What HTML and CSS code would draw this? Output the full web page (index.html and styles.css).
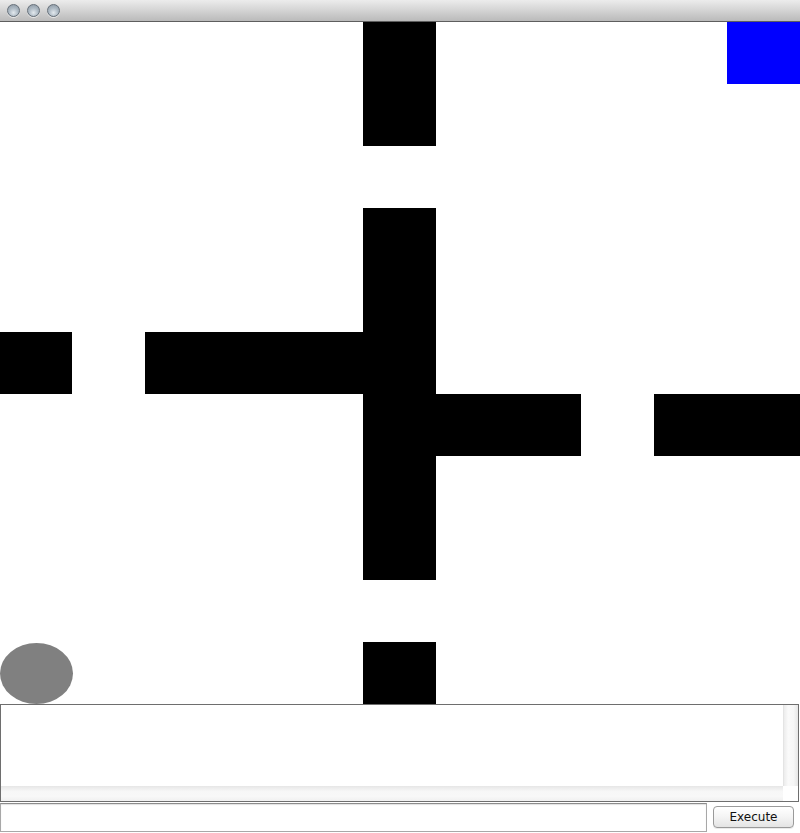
FILE: index.html
```html
<!DOCTYPE html>
<html>
<head>
<meta charset="utf-8">
<link rel="stylesheet" href="styles.css">
</head>
<body>
<div class="window">
  <div class="titlebar">
    <span class="light"></span>
    <span class="light"></span>
    <span class="light"></span>
  </div>
  <div class="board">
    <div class="cell wall" style="grid-column:6;grid-row:1 / span 2"></div>
    <div class="cell goal" style="grid-column:11;grid-row:1"></div>
    <div class="cell wall" style="grid-column:6;grid-row:4 / span 6"></div>
    <div class="cell wall" style="grid-column:1;grid-row:6"></div>
    <div class="cell wall" style="grid-column:3 / span 3;grid-row:6"></div>
    <div class="cell wall" style="grid-column:7 / span 2;grid-row:7"></div>
    <div class="cell wall" style="grid-column:10 / span 2;grid-row:7"></div>
    <div class="cell wall" style="grid-column:6;grid-row:11"></div>
    <div class="cell robot" style="grid-column:1;grid-row:11"></div>
  </div>
  <div class="console">
    <div class="console-main">
      <div class="console-text"></div>
      <div class="vscroll"></div>
    </div>
    <div class="console-bottom">
      <div class="hscroll"></div>
      <div class="corner"></div>
    </div>
  </div>
  <div class="command">
    <input class="command-input" type="text">
    <button class="execute">Execute</button>
  </div>
</div>
</body>
</html>
```

FILE: styles.css
```css
html, body {
  margin: 0;
  padding: 0;
  background: #ffffff;
  overflow: hidden;
}
.window {
  width: 800px;
  height: 833px;
  display: flex;
  flex-direction: column;
  font-family: "DejaVu Sans", sans-serif;
}
.titlebar {
  height: 21px;
  border-bottom: 1px solid #5e5e5e;
  background: linear-gradient(to bottom, #ececec 0%, #d6d6d6 45%, #bababa 100%);
  display: flex;
  align-items: center;
  gap: 7px;
  padding-left: 7px;
  box-sizing: content-box;
}
.light {
  width: 11px;
  height: 11px;
  border-radius: 50%;
  border: 1px solid #66707a;
  background: radial-gradient(circle at 50% 70%, #e3e9ee 0%, #b0bcc6 45%, #8894a0 100%);
  box-shadow: 0 1px 0 rgba(255,255,255,0.6);
}
.board {
  height: 682px;
  display: grid;
  grid-template-columns: 72px 73px 73px 72px 73px 73px 73px 72px 73px 73px 73px;
  grid-template-rows: repeat(11, 62px);
  background: #ffffff;
}
.wall { background: #000000; }
.goal { background: #0000ff; }
.robot {
  background: #808080;
  border-radius: 50%;
  width: 73px;
  margin-top: 1px;
  height: 61px;
}
.console {
  height: 97px;
  width: 797px;
  border: 1px solid #6e6e6e;
  display: flex;
  flex-direction: column;
  background: #ffffff;
}
.console-main {
  flex: 1;
  display: flex;
}
.console-text { flex: 1; }
.vscroll {
  width: 14px;
  background: linear-gradient(to right, #ececec 0%, #fafafa 30%, #f6f6f6 70%, #e6e6e6 100%);
  border-left: 1px solid #e4e4e4;
}
.console-bottom {
  height: 15px;
  display: flex;
}
.hscroll {
  flex: 1;
  background: linear-gradient(to bottom, #e6e6e6 0%, #f7f7f7 35%, #f8f8f8 70%, #f0f0f0 100%);
}
.corner {
  width: 15px;
  background: #ffffff;
}
.command {
  height: 30px;
  display: flex;
  align-items: flex-start;
  padding-top: 1px;
}
.command-input {
  width: 707px;
  height: 29px;
  box-sizing: border-box;
  margin: 0;
  border: 1px solid #a8a8a8;
  border-top-color: #8c8c8c;
  box-shadow: inset 0 1px 1px rgba(0,0,0,0.12);
  background: #ffffff;
  outline: none;
  padding: 0 4px;
}
.execute {
  margin: 3px 0 0 6px;
  width: 81px;
  height: 22px;
  box-sizing: border-box;
  border: 1px solid #9a9a9a;
  border-radius: 4px;
  background: linear-gradient(to bottom, #ffffff 0%, #f4f4f4 50%, #e4e4e4 100%);
  font-family: "DejaVu Sans", sans-serif;
  font-size: 12px;
  color: #111111;
  padding: 0;
  line-height: 20px;
  box-shadow: 0 1px 0 rgba(0,0,0,0.08);
}
```
